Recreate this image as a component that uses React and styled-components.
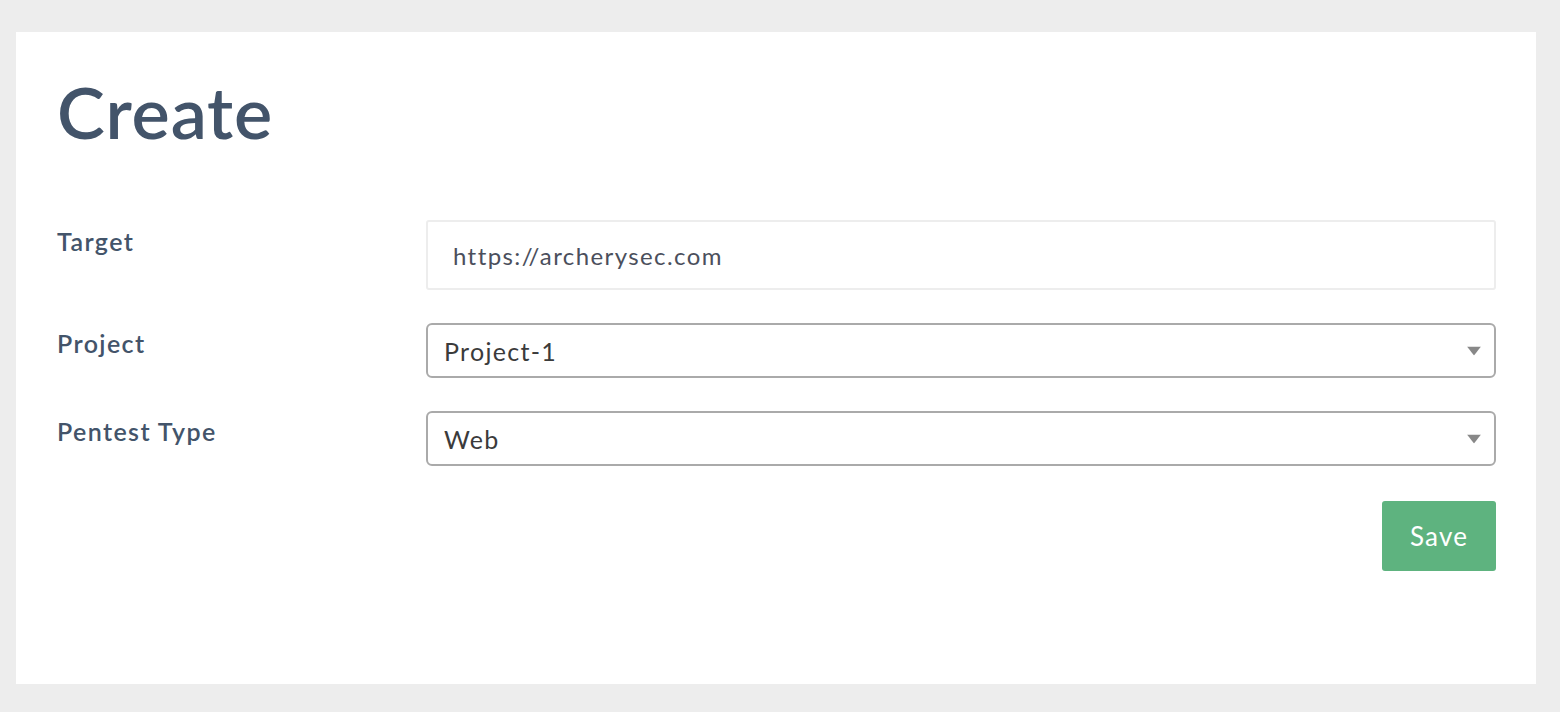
import React from "react";
import styled, { createGlobalStyle } from "styled-components";

const GlobalStyle = createGlobalStyle`
  html, body {
    margin: 0;
    padding: 0;
    background: #ededed;
  }
  body {
    font-family: Lato, "Noto Sans", sans-serif;
  }
`;

const Page = styled.div`
  padding: 32px 24px 28px 16px;
  box-sizing: border-box;
  min-height: 712px;
`;

const Card = styled.div`
  background: #ffffff;
  padding: 35px 40px 113px 41px;
`;

const Title = styled.h1`
  margin: 0 0 65px;
  font-size: 72px;
  line-height: 88px;
  font-weight: 600;
  color: #43546a;
  letter-spacing: 0.8px;
`;

const Form = styled.form`
  display: flex;
  flex-direction: column;
  gap: 33px;
`;

const Row = styled.div`
  display: grid;
  grid-template-columns: 369px 1fr;
  align-items: start;
`;

const Label = styled.label`
  padding-top: ${(p) => p.offset || 6}px;
  font-size: 25px;
  line-height: 30px;
  font-weight: 600;
  color: #43546a;
  letter-spacing: 1.4px;
`;

const TextInput = styled.input`
  box-sizing: border-box;
  width: 100%;
  height: 70px;
  padding: 0 25px;
  border: 2px solid #ededed;
  border-radius: 3px;
  font-family: Lato, "Noto Sans", sans-serif;
  font-size: 24px;
  color: #4b4f5c;
  background: #fff;
  letter-spacing: 1.4px;
  outline: none;
`;

const SelectWrap = styled.div`
  position: relative;
`;

const Select = styled.select`
  appearance: none;
  -webkit-appearance: none;
  box-sizing: border-box;
  width: 100%;
  height: 55px;
  padding: 0 40px 0 16px;
  border: 2px solid #aaaaaa;
  border-radius: 6px;
  background: #fff;
  font-family: Lato, "Noto Sans", sans-serif;
  font-size: 25px;
  color: #3b3b3b;
  letter-spacing: 1.3px;
  outline: none;
`;

const Arrow = styled.svg`
  position: absolute;
  right: 15px;
  top: 50%;
  transform: translateY(-50%);
  pointer-events: none;
`;

const Actions = styled.div`
  display: flex;
  justify-content: flex-end;
  margin-top: 2px;
`;

const SaveButton = styled.button`
  width: 114px;
  height: 70px;
  border: none;
  border-radius: 3px;
  background: #5eb37f;
  color: #ffffff;
  font-family: Lato, "Noto Sans", sans-serif;
  font-size: 26px;
  letter-spacing: 1.2px;
  cursor: pointer;
`;

const ArrowIcon = () => (
  <Arrow width="14" height="9" viewBox="0 0 14 9">
    <polygon points="0,0 14,0 7,9" fill="#888888" />
  </Arrow>
);

const SelectField = ({ value, options }) => (
  <SelectWrap>
    <Select defaultValue={value}>
      {options.map((o) => (
        <option key={o}>{o}</option>
      ))}
    </Select>
    <ArrowIcon />
  </SelectWrap>
);

const App = () => (
  <>
    <GlobalStyle />
    <Page>
      <Card>
        <Title>Create</Title>
        <Form onSubmit={(e) => e.preventDefault()}>
          <Row>
            <Label>Target</Label>
            <TextInput defaultValue="https://archerysec.com" />
          </Row>
          <Row>
            <Label offset={5}>Project</Label>
            <SelectField value="Project-1" options={["Project-1"]} />
          </Row>
          <Row>
            <Label offset={5}>Pentest Type</Label>
            <SelectField value="Web" options={["Web", "Network"]} />
          </Row>
          <Actions>
            <SaveButton type="submit">Save</SaveButton>
          </Actions>
        </Form>
      </Card>
    </Page>
  </>
);

export default App;
